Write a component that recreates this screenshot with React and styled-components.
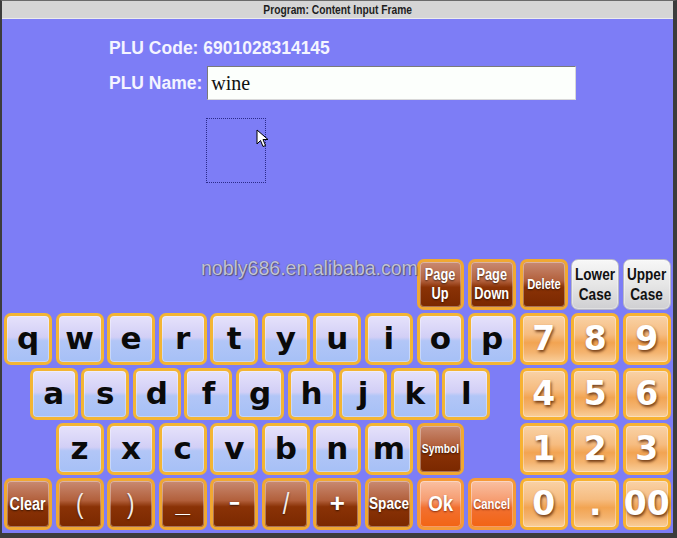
import styled, { createGlobalStyle, css } from "styled-components";

const GlobalStyle = createGlobalStyle`
  html, body {
    margin: 0;
    padding: 0;
    overflow: hidden;
  }
  body {
    font-family: "Liberation Sans", Arial, sans-serif;
  }
`;

const Window = styled.div`
  position: relative;
  box-sizing: border-box;
  width: 677px;
  height: 538px;
  display: flex;
  flex-direction: column;
  border-left: 2px solid #3c3c3c;
  border-right: 4px solid #3c3c3c;
  border-bottom: 5px solid #3c3c3c;
  border-top: 1px solid #6a6a6a;
  background: #7d7df6;
`;

const TitleBar = styled.div`
  height: 17px;
  background: #d5d5d5;
  border-bottom: 1px solid #ececec;
  display: flex;
  align-items: center;
  justify-content: center;
  font-family: "Liberation Sans", Arial, sans-serif;
  font-weight: 700;
  font-size: 12.5px;
  color: #1e1e1e;
`;

const Narrow = styled.span`
  display: inline-block;
  transform: scaleX(${(p) => p.$x || 0.8});
  white-space: pre-line;
`;

const Body = styled.div`
  flex: 1;
  display: flex;
  flex-direction: column;
  padding: 0 0 3px 0;
`;

const Form = styled.div`
  padding: 19px 0 0 107px;
  display: flex;
  flex-direction: column;
`;

const Label = styled.div`
  font-family: "Liberation Sans", Arial, sans-serif;
  font-weight: 700;
  font-size: 17.5px;
  color: #f4f4ff;
  line-height: 20px;
`;

const NameRow = styled.div`
  display: flex;
  align-items: center;
  gap: 5px;
  margin-top: 8px;
`;

const Input = styled.div`
  box-sizing: border-box;
  width: 369px;
  height: 34px;
  background: #fcfffc;
  border: 1px solid #7a7a7a;
  border-right-color: #d8d8d8;
  border-bottom-color: #d8d8d8;
  padding: 5px 0 0 3px;
  font-family: "Liberation Serif", "Times New Roman", serif;
  font-size: 20px;
  color: #111;
`;

const FocusBox = styled.div`
  width: 58px;
  height: 63px;
  margin: 18px 0 0 97px;
  border: 1px dotted #2a2a8a;
`;

const Keyboard = styled.div`
  margin-top: auto;
  margin-left: 2px;
  display: grid;
  grid-template-columns: repeat(26, 22.2px);
  grid-template-rows: 51px repeat(4, 52px);
  column-gap: 3.6px;
  row-gap: 3px;
`;

const kinds = {
  letter: css`
    border: 3px solid #f3b534;
    background: linear-gradient(
      to bottom,
      #e6e2fb 0%,
      #d2cff6 46%,
      #b2c6f7 54%,
      #a6c0f6 100%
    );
    color: #0a0a0a;
    font-family: "DejaVu Sans", Verdana, sans-serif;
    font-weight: 700;
  `,
  brown: css`
    border: 3px solid #f0a832;
    background: linear-gradient(
      to bottom,
      #c98a72 0%,
      #b2603c 42%,
      #8a3206 56%,
      #7a2800 100%
    );
    color: #fff;
    font-family: "Liberation Sans", Arial, sans-serif;
    font-weight: 700;
    text-shadow: 0 1px 2px rgba(0, 0, 0, 0.6);
  `,
  symbol: css`
    border: 3px solid #f0a832;
    background: linear-gradient(
      to bottom,
      #c98a72 0%,
      #b2603c 42%,
      #8a3206 56%,
      #7a2800 100%
    );
    color: #f4ece8;
    font-family: "Liberation Sans", Arial, sans-serif;
    font-weight: 400;
    text-shadow: 0 1px 2px rgba(0, 0, 0, 0.5);
  `,
  number: css`
    border: 3px solid #f7b232;
    background: linear-gradient(
      to bottom,
      #f9d2a6 0%,
      #f6bc80 40%,
      #f2a452 58%,
      #f4b470 80%,
      #f9cf9c 100%
    );
    color: #fff;
    font-family: "DejaVu Sans", Verdana, sans-serif;
    font-weight: 700;
    text-shadow: 1px 2px 3px rgba(80, 30, 0, 0.8);
  `,
  action: css`
    border: 3px solid #f59a38;
    background: linear-gradient(
      to bottom,
      #f9c0a2 0%,
      #f69c70 42%,
      #f27030 58%,
      #f26414 100%
    );
    color: #fff;
    font-family: "Liberation Sans", Arial, sans-serif;
    font-weight: 700;
    text-shadow: 0 1px 2px rgba(90, 20, 0, 0.7);
  `,
  grey: css`
    border: 1px solid #b8b8c4;
    background: linear-gradient(to bottom, #f7f7f7 0%, #e6e6e6 50%, #cfcfd2 100%);
    color: #111;
    font-family: "Liberation Sans", Arial, sans-serif;
    font-weight: 700;
  `,
};

const Key = styled.div`
  box-sizing: border-box;
  grid-column: ${(p) => p.$at + 1} / span 2;
  grid-row: ${(p) => p.$row};
  border-radius: 7px;
  display: flex;
  align-items: center;
  justify-content: center;
  text-align: center;
  white-space: pre-line;
  line-height: 1.15;
  font-size: ${(p) => p.$size}px;
  box-shadow: inset 0 0 0 1px rgba(255, 255, 255, 0.35);
  ${(p) => kinds[p.$kind]}
`;

const Watermark = styled.div`
  position: absolute;
  left: 199px;
  top: 256px;
  font-family: "Liberation Sans", Arial, sans-serif;
  font-size: 19.5px;
  color: rgba(214, 214, 236, 0.85);
  text-shadow: 0 0 1px #555, 1px 1px 1px rgba(60, 60, 60, 0.6);
  pointer-events: none;
`;

const Pointer = styled.svg`
  position: absolute;
  left: 254px;
  top: 128px;
`;

const letterRows = [
  { row: 2, start: 0, keys: "qwertyuiop" },
  { row: 3, start: 1, keys: "asdfghjkl" },
  { row: 4, start: 2, keys: "zxcvbnm" },
];

const keys = [
  { row: 1, at: 16, label: "Page\nUp", kind: "brown", size: 16, narrow: 0.8 },
  { row: 1, at: 18, label: "Page\nDown", kind: "brown", size: 16, narrow: 0.8 },
  { row: 1, at: 20, label: "Delete", kind: "brown", size: 14, narrow: 0.8 },
  { row: 1, at: 22, label: "Lower\nCase", kind: "grey", size: 17, narrow: 0.8 },
  { row: 1, at: 24, label: "Upper\nCase", kind: "grey", size: 17, narrow: 0.8 },
  ...letterRows.flatMap((r) =>
    r.keys.split("").map((ch, i) => ({
      row: r.row,
      at: r.start + i * 2,
      label: ch,
      kind: "letter",
      size: 31,
    }))
  ),
  { row: 4, at: 16, label: "Symbol", kind: "brown", size: 13, narrow: 0.8 },
  { row: 5, at: 0, label: "Clear", kind: "brown", size: 18, narrow: 0.8 },
  { row: 5, at: 2, label: "(", kind: "symbol", size: 28, narrow: 0.8 },
  { row: 5, at: 4, label: ")", kind: "symbol", size: 28, narrow: 0.8 },
  { row: 5, at: 6, label: "_", kind: "brown", size: 26 },
  { row: 5, at: 8, label: "−", kind: "brown", size: 26, narrow: 0.7 },
  { row: 5, at: 10, label: "/", kind: "symbol", size: 30, narrow: 0.8 },
  { row: 5, at: 12, label: "+", kind: "brown", size: 26 },
  { row: 5, at: 14, label: "Space", kind: "brown", size: 17, narrow: 0.8 },
  { row: 5, at: 16, label: "Ok", kind: "action", size: 22, narrow: 0.85 },
  { row: 5, at: 18, label: "Cancel", kind: "action", size: 15, narrow: 0.75 },
];

const numpad = [
  ["7", "8", "9"],
  ["4", "5", "6"],
  ["1", "2", "3"],
  ["0", ".", "00"],
];

numpad.forEach((line, r) =>
  line.forEach((d, i) =>
    keys.push({ row: r + 2, at: 20 + i * 2, label: d, kind: "number", size: 33 })
  )
);

function App() {
  return (
    <>
      <GlobalStyle />
      <Window>
        <TitleBar>
          <Narrow $x={0.82}>Program: Content Input Frame</Narrow>
        </TitleBar>
        <Body>
          <Form>
            <Label>PLU Code: 6901028314145</Label>
            <NameRow>
              <Label>PLU Name:</Label>
              <Input>wine</Input>
            </NameRow>
            <FocusBox />
          </Form>
          <Keyboard>
            {keys.map((k) => (
              <Key
                key={`${k.row}-${k.at}`}
                $row={k.row}
                $at={k.at}
                $kind={k.kind}
                $size={k.size}
              >
                {k.narrow ? <Narrow $x={k.narrow}>{k.label}</Narrow> : k.label}
              </Key>
            ))}
          </Keyboard>
        </Body>
        <Watermark>nobly686.en.alibaba.com</Watermark>
        <Pointer width="14" height="20" viewBox="0 0 14 20">
          <path
            d="M1 1 L1 15 L4.5 11.5 L7 17.5 L9.5 16.5 L7 10.5 L12 10.5 Z"
            fill="#fff"
            stroke="#000"
            strokeWidth="1"
            strokeLinejoin="round"
          />
        </Pointer>
      </Window>
    </>
  );
}

export default App;
